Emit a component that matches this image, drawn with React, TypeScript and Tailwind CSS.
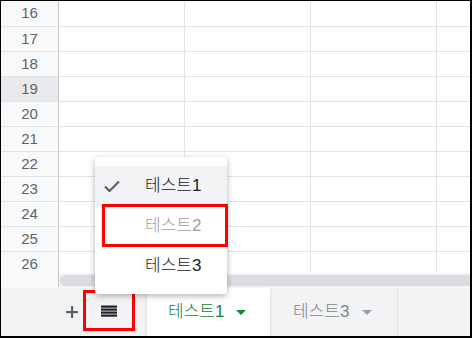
import React from 'react';

const rows = [16, 17, 18, 19, 20, 21, 22, 23, 24, 25, 26];

const MenuIcon: React.FC = () => (
  <svg width="16" height="12" viewBox="0 0 16 12" fill="#202124">
    <rect x="0" y="0.5" width="16" height="2.2" />
    <rect x="0" y="3.5" width="16" height="2.2" />
    <rect x="0" y="6.5" width="16" height="2.2" />
    <rect x="0" y="9.5" width="16" height="2.2" />
  </svg>
);

const Caret: React.FC<{ color: string }> = ({ color }) => (
  <svg width="10" height="5" viewBox="0 0 10 5">
    <path d="M0 0h10L5 5z" fill={color} />
  </svg>
);

const App: React.FC = () => {
  return (
    <div
      className="relative w-[472px] h-[338px] overflow-hidden bg-white border-black border-t border-l border-r-2 border-b-2 flex flex-col"
      style={{ fontFamily: '"Liberation Sans", "Noto Sans CJK KR", sans-serif' }}
    >
      {/* grid */}
      <div className="h-[272px] overflow-hidden">
        {rows.map((n, i) => (
          <div
            key={n}
            className={`flex border-b border-[#e2e3e3] ${i === 0 ? 'h-[26px]' : 'h-[25px]'}`}
          >
            <div
              className={`w-[58px] shrink-0 border-r border-[#c4c7c5] flex items-center justify-center text-[15px] text-[#5f6368] ${
                n === 19 ? 'bg-[#e8eaed]' : 'bg-[#f8f9fa]'
              }`}
            >
              {n}
            </div>
            <div className="w-[126px] shrink-0 border-r border-[#e2e3e3]" />
            <div className="w-[126px] shrink-0 border-r border-[#e2e3e3]" />
            <div className="w-[126px] shrink-0 border-r border-[#e2e3e3]" />
            <div className="flex-1" />
          </div>
        ))}
      </div>

      {/* horizontal scrollbar */}
      <div className="h-[14px] flex bg-[#f1f3f4]">
        <div className="w-[58px] shrink-0 bg-[#f8f9fa] border-r border-[#c4c7c5]" />
        <div className="flex-1 flex items-center pl-[1px]">
          <div className="h-[11px] w-full rounded-l-full bg-[#dadce0]" />
        </div>
      </div>

      {/* sheet tab bar */}
      <div className="flex-1 flex bg-[#f1f3f4] border-t border-[#f8f9fa]">
        <div className="w-[82px] shrink-0 flex items-center justify-end pr-[5px]">
          <svg width="12" height="12" viewBox="0 0 12 12" fill="#5f6368">
            <rect x="5" y="0" width="2.2" height="12" />
            <rect x="0" y="5" width="12" height="2.2" />
          </svg>
        </div>
        <div className="mt-[2px] w-[52px] h-[41px] shrink-0 border-[3px] border-[#ff0000] flex items-center justify-center">
          <MenuIcon />
        </div>
        <div className="w-[12px] shrink-0" />
        <div className="w-[123px] shrink-0 bg-white flex items-center pl-[21px] gap-[12px] shadow-[0_1px_3px_rgba(0,0,0,0.15)]">
          <span className="text-[17px] font-light text-[#188038]">테스트1</span>
          <Caret color="#188038" />
        </div>
        <div className="w-[128px] shrink-0 flex items-center pl-[23px] gap-[13px] border-r border-[#e0e2e4]">
          <span className="text-[17px] font-light text-[#80868b]">테스트3</span>
          <Caret color="#9aa0a6" />
        </div>
      </div>

      {/* sheets menu */}
      <div className="absolute left-[94px] top-[156px] w-[132px] bg-white rounded-[3px] shadow-[0_2px_6px_rgba(0,0,0,0.3)] pt-[9px] pb-[8px]">
        <div className="h-[40px] flex items-center bg-[#f1f3f4]">
          <svg className="ml-[9px]" width="16" height="12" viewBox="0 0 16 12">
            <path d="M1 6.5l4.5 4.5L15 1.5" fill="none" stroke="#5f6368" strokeWidth="2.2" />
          </svg>
          <span className="ml-[25px] text-[17px] font-light text-[#202124]">테스트1</span>
        </div>
        <div className="h-[40px] flex items-center pl-[50px]">
          <span className="text-[17px] font-light text-[#9aa0a6]">테스트2</span>
        </div>
        <div className="h-[40px] flex items-center pl-[50px]">
          <span className="text-[17px] font-light text-[#202124]">테스트3</span>
        </div>
      </div>

      {/* highlight box around second item */}
      <div className="absolute left-[101px] top-[203px] w-[126px] h-[43px] border-[3px] border-[#ff0000]" />
    </div>
  );
};

export default App;
